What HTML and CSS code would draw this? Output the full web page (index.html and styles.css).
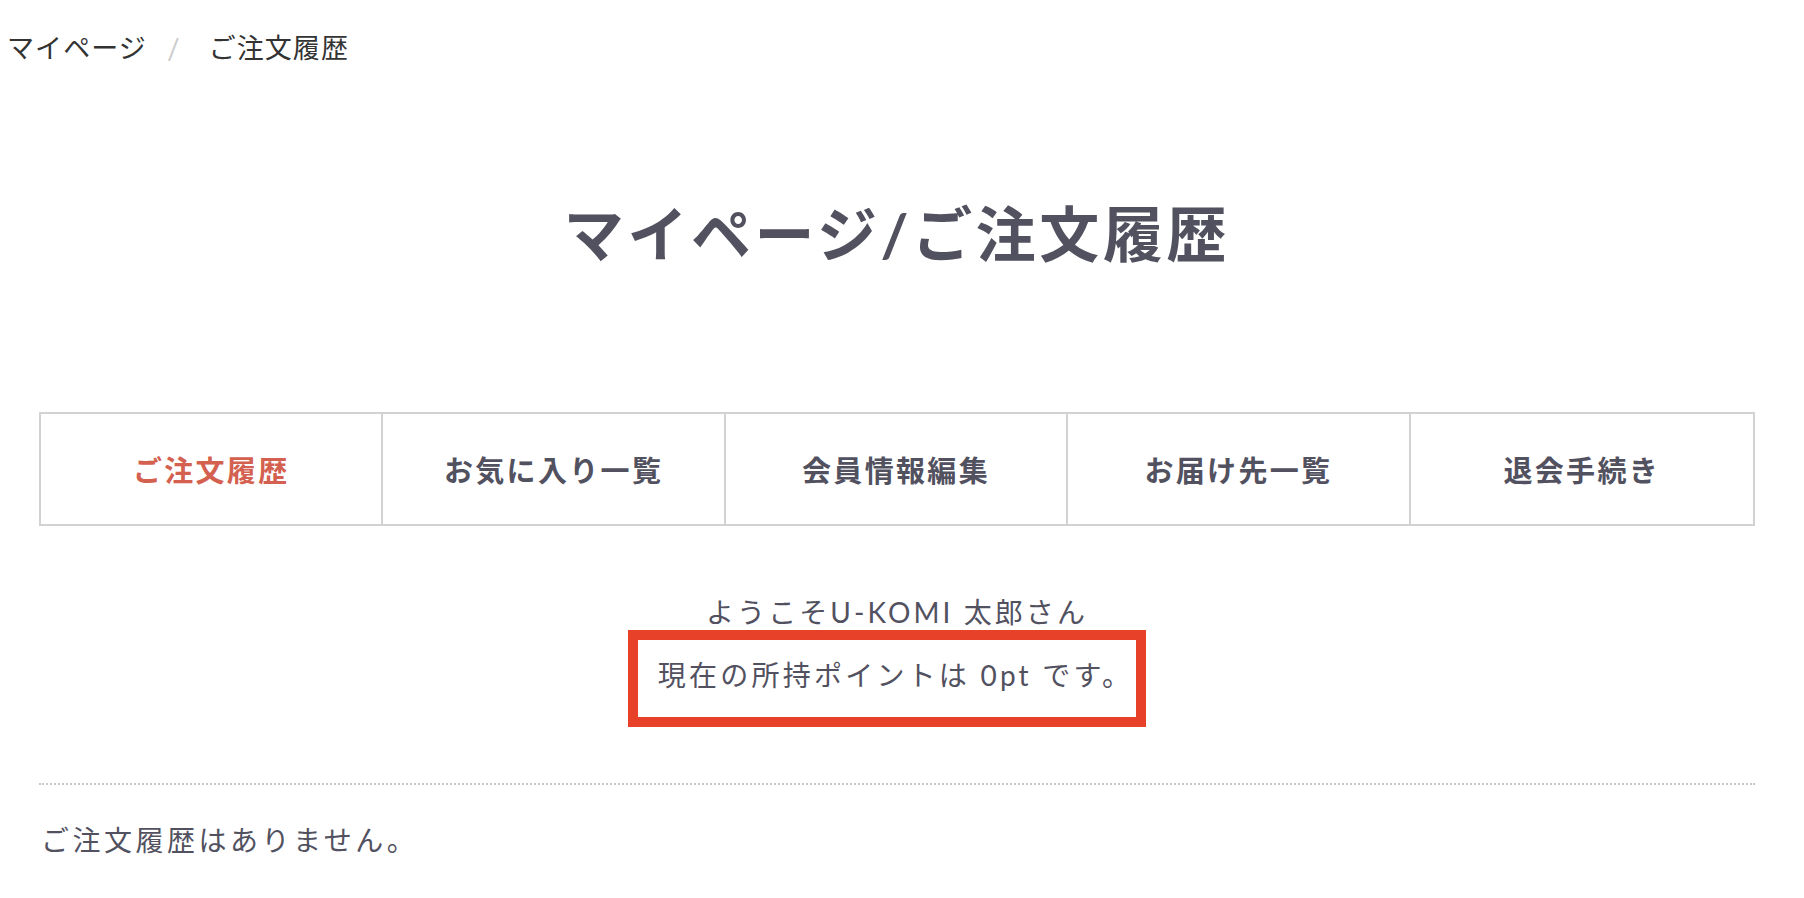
FILE: index.html
```html
<!DOCTYPE html>
<html lang="ja">
<head>
<meta charset="utf-8">
<title>マイページ/ご注文履歴</title>
<link rel="stylesheet" href="styles.css">
</head>
<body>
  <nav class="breadcrumb">
    <a class="crumb" href="#">マイページ</a>
    <span class="crumb-sep">/</span>
    <span class="crumb current">ご注文履歴</span>
  </nav>

  <main class="mypage">
    <h1 class="page-title">マイページ/ご注文履歴</h1>

    <ul class="tabs">
      <li class="tab active"><a href="#">ご注文履歴</a></li>
      <li class="tab"><a href="#">お気に入り一覧</a></li>
      <li class="tab"><a href="#">会員情報編集</a></li>
      <li class="tab"><a href="#">お届け先一覧</a></li>
      <li class="tab"><a href="#">退会手続き</a></li>
    </ul>

    <section class="welcome">
      <p class="welcome-name">ようこそU-KOMI 太郎さん</p>
      <p class="points">現在の所持ポイントは 0pt です。</p>
    </section>

    <hr class="divider">

    <p class="empty">ご注文履歴はありません。</p>
  </main>
</body>
</html>
```

FILE: styles.css
```css
html, body {
  margin: 0;
  padding: 0;
  background: #ffffff;
}

body {
  font-family: Lato, "Noto Sans CJK JP", "Noto Sans", sans-serif;
  color: #52515f;
}

a {
  color: inherit;
  text-decoration: none;
}

.breadcrumb {
  display: flex;
  align-items: center;
  padding: 30px 0 0 7px;
  font-size: 27px;
  line-height: 36px;
  letter-spacing: 0.04em;
  color: #333333;
}

.crumb-sep {
  color: #cccccc;
  margin: 0 28px 0 20px;
  font-size: 28px;
}

.mypage {
  width: 1716px;
  margin-left: 39px;
}

.page-title {
  margin: 132px 0 0;
  text-align: center;
  font-size: 60px;
  line-height: 72px;
  font-weight: 700;
  letter-spacing: 0.06em;
  color: #52515f;
}

.tabs {
  list-style: none;
  margin: 142px 0 0;
  padding: 0;
  display: grid;
  grid-template-columns: repeat(5, 1fr);
  border: 2px solid #d2d2d2;
}

.tab {
  height: 110px;
  display: flex;
  align-items: center;
  justify-content: center;
  border-right: 2px solid #d2d2d2;
  font-size: 29px;
  font-weight: 700;
  letter-spacing: 0.08em;
  color: #52515f;
}

.tab:last-child {
  border-right: none;
}

.tab.active {
  color: #d4604f;
}

.welcome {
  display: flex;
  flex-direction: column;
  align-items: center;
  margin-top: 66px;
}

.welcome-name {
  margin: 0;
  font-size: 28px;
  line-height: 40px;
  letter-spacing: 0.11em;
}

.points {
  box-sizing: border-box;
  width: 518px;
  margin: -2px 21px 0 0;
  padding: 10px 0 17px 18px;
  border: 10px solid #e8412a;
  text-align: center;
  font-size: 28px;
  line-height: 50px;
  letter-spacing: 0.115em;
}

.divider {
  margin: 56px 0 0;
  border: none;
  border-top: 2px dotted #c8c8c8;
  height: 0;
}

.empty {
  margin: 30px 0 0;
  padding-left: 2px;
  font-size: 28px;
  line-height: 50px;
  letter-spacing: 0.125em;
}
```
